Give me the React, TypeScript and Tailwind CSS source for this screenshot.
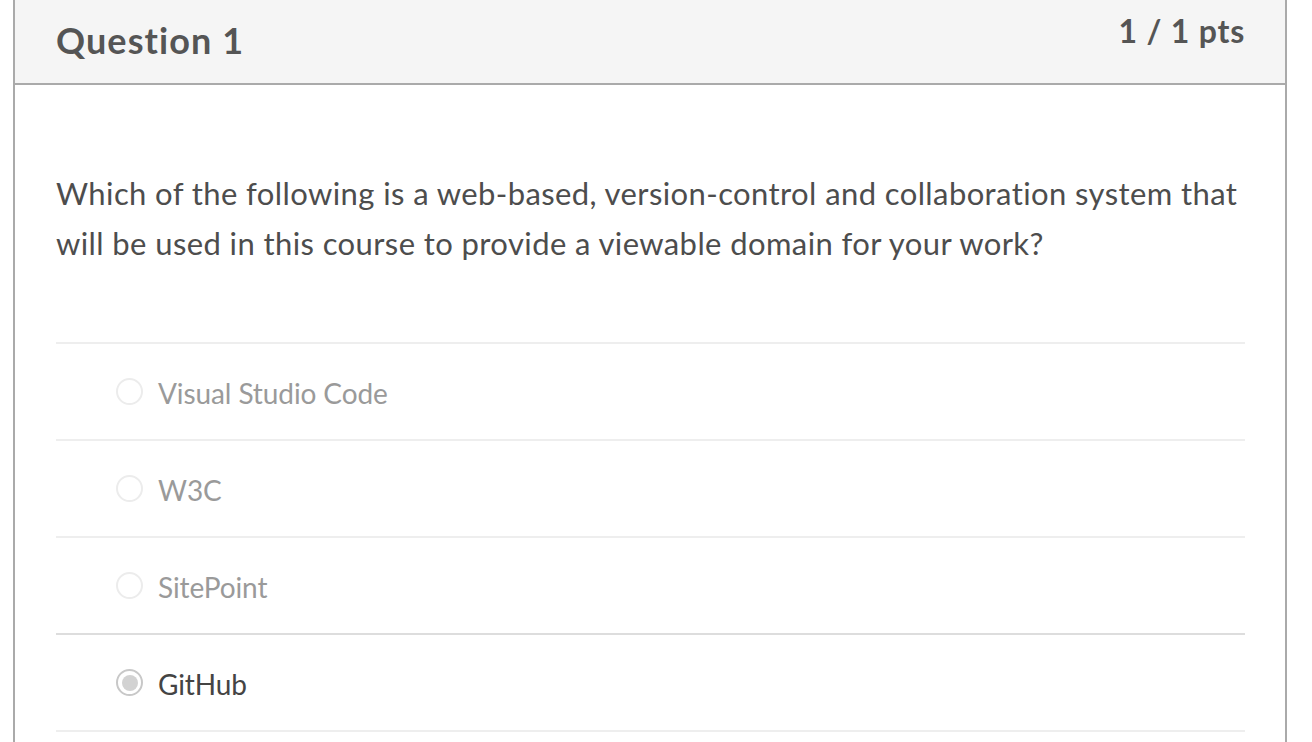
import React from 'react';

const answers = [
  { label: 'Visual Studio Code', selected: false },
  { label: 'W3C', selected: false },
  { label: 'SitePoint', selected: false },
  { label: 'GitHub', selected: true },
];

function Radio({ selected }: { selected: boolean }) {
  return (
    <span
      className={`flex h-[27px] w-[27px] shrink-0 items-center justify-center rounded-full border-2 ${
        selected ? 'border-[#c8c8c8] bg-white' : 'border-[#ececec] bg-white'
      }`}
    >
      {selected && <span className="h-[16px] w-[16px] rounded-full bg-[#d2d2d2]" />}
    </span>
  );
}

export default function App() {
  return (
    <div className="min-h-screen bg-white pl-[13px] pr-[25px] font-['Lato','Noto_Sans',sans-serif]">
      <div className="h-[742px] overflow-hidden border-x-2 border-[#aaaaaa]">
        {/* header */}
        <div className="flex h-[85px] items-start justify-between border-b-2 border-[#aaaaaa] bg-[#f5f5f5] pl-[41px] pr-[40px]">
          <h2 className="mt-[17px] text-[36px] font-bold leading-[46px] tracking-[1.1px] text-[#555555]">
            Question 1
          </h2>
          <div className="mt-[11px] text-[32px] font-bold leading-[40px] tracking-[0.8px] text-[#555555]">
            1 / 1 pts
          </div>
        </div>

        {/* body */}
        <div className="pl-[41px] pr-[40px] pt-[83px]">
          <p className="text-[31px] leading-[50px] tracking-[0.4px] text-[#4d4d4d]">
            Which of the following is a web-based, version-control and collaboration system that will be used in
            this course to provide a viewable domain for your work?
          </p>

          <div className="mt-[74px]">
            {answers.map((a, i) => (
              <div
                key={a.label}
                className={`flex h-[97px] items-center gap-[15px] border-t-2 pl-[60px] ${
                  i === 3 ? 'border-[#dddddd]' : 'border-[#eeeeee]'
                }`}
              >
                <Radio selected={a.selected} />
                <span
                  className={`pt-[3px] text-[28px] leading-none tracking-[-0.1px] ${
                    a.selected ? 'text-[#444444]' : 'text-[#9a9a9a]'
                  }`}
                >
                  {a.label}
                </span>
              </div>
            ))}
            <div className="border-t-2 border-[#eeeeee]" />
          </div>
        </div>
      </div>
    </div>
  );
}
